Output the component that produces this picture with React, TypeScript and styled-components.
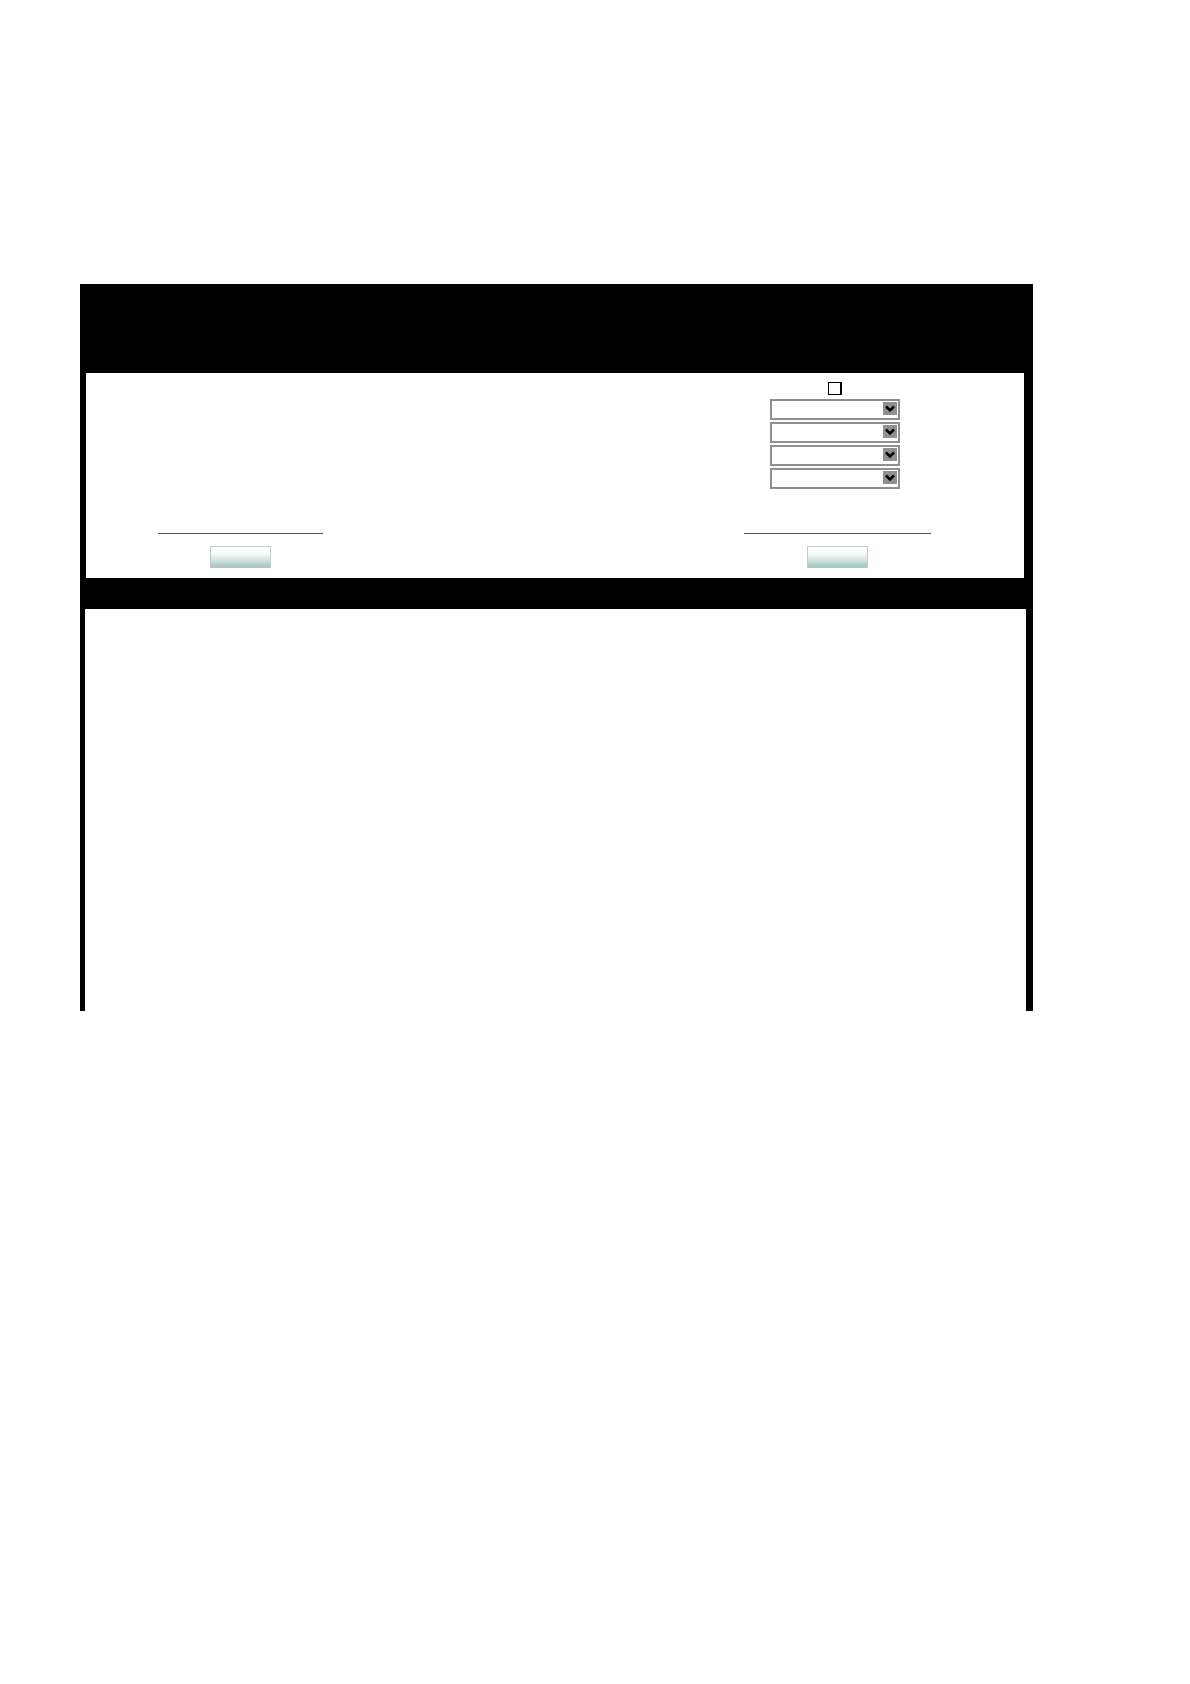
import React from "react";
import styled, { createGlobalStyle } from "styled-components";

const GlobalStyle = createGlobalStyle`
  *, *::before, *::after { box-sizing: border-box; }
  body {
    margin: 0;
    background: #fff;
    font-family: "Liberation Sans", Arial, sans-serif;
    font-size: 12px;
  }
`;

const Page = styled.main`
  padding: 284px 157px 0 80px;
`;

const Frame = styled.div`
  display: flex;
  flex-direction: column;
  background: #000;
`;

const Header = styled.header`
  height: 89px;
`;

const SearchPanel = styled.form`
  display: grid;
  grid-template-columns: 308fr 256fr 374fr;
  align-items: end;
  margin: 0 9px 0 6px;
  padding: 9px 0 10px;
  background: #fff;
`;

const Column = styled.div<{ $start: number }>`
  grid-column: ${(p) => p.$start};
  display: flex;
  flex-direction: column;
  align-items: center;
`;

const Fields = styled.div`
  display: flex;
  flex-direction: column;
  align-items: center;
  gap: 2px;
  margin-bottom: 25px;
  padding-right: 4px;
`;

const Tick = styled.input`
  appearance: none;
  width: 14px;
  height: 13px;
  margin: 0 0 2px;
  border: 1px solid #000;
  border-right-width: 2px;
  background: #fff;
  &:checked { background: #555; }
`;

const SelectBox = styled.div`
  position: relative;
  width: 130px;
  height: 21px;
`;

const Select = styled.select`
  appearance: none;
  display: block;
  width: 100%;
  height: 100%;
  margin: 0;
  padding: 0 20px 0 4px;
  border: 2px solid #909090;
  border-radius: 0;
  background: #fff;
  font: inherit;
`;

const Arrow = styled.svg`
  position: absolute;
  top: 3px;
  right: 3px;
  width: 14px;
  height: 13px;
  background: #909090;
  pointer-events: none;
`;

const Link = styled.a<{ $width: number }>`
  width: ${(p) => p.$width}px;
  height: 20px;
  margin-bottom: 12px;
  border-bottom: 1px solid #50468c;
`;

const Button = styled.button<{ $tone: string }>`
  width: 61px;
  height: 22px;
  padding: 0;
  border: 1px solid #c4cccb;
  border-bottom-color: ${(p) => p.$tone};
  border-radius: 1px;
  background: linear-gradient(#fff 0%, #f5faf9 35%, #d8e8e5 60%, ${(p) => p.$tone} 95%);
`;

const Divider = styled.div`
  height: 31px;
`;

const Results = styled.section`
  height: 402px;
  margin: 0 7px 0 5px;
  background: #fff;
`;

const fields = ["First option", "Second option", "Third option", "Fourth option"];

function Dropdown({ label }: { label: string }) {
  return (
    <SelectBox>
      <Select aria-label={label} />
      <Arrow viewBox="0 0 14 13" aria-hidden="true">
        <path d="M3 4.5 L7 8.5 L11 4.5" fill="none" stroke="#000" strokeWidth="2.5" />
      </Arrow>
    </SelectBox>
  );
}

export default function App() {
  return (
    <>
      <GlobalStyle />
      <Page>
        <Frame>
          <Header />
          <SearchPanel onSubmit={(e) => e.preventDefault()}>
            <Column $start={1}>
              <Link href="#left" aria-label="Left link" $width={165} />
              <Button type="submit" aria-label="Left button" $tone="#adc8c6" />
            </Column>
            <Column $start={3}>
              <Fields>
                <Tick type="checkbox" aria-label="Enable options" />
                {fields.map((label) => (
                  <Dropdown key={label} label={label} />
                ))}
              </Fields>
              <Link href="#right" aria-label="Right link" $width={187} />
              <Button type="submit" aria-label="Right button" $tone="#a3c9c3" />
            </Column>
          </SearchPanel>
          <Divider />
          <Results />
        </Frame>
      </Page>
    </>
  );
}
